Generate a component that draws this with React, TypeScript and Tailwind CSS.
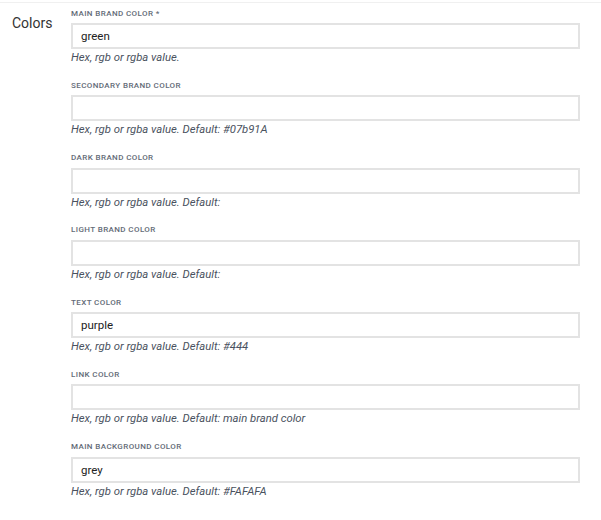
const fields = [
  { label: "Main brand color *", value: "green", hint: "Hex, rgb or rgba value." },
  { label: "Secondary brand color", value: "", hint: "Hex, rgb or rgba value. Default: #07b91A" },
  { label: "Dark brand color", value: "", hint: "Hex, rgb or rgba value. Default:" },
  { label: "Light brand color", value: "", hint: "Hex, rgb or rgba value. Default:" },
  { label: "Text color", value: "purple", hint: "Hex, rgb or rgba value. Default: #444" },
  { label: "Link color", value: "", hint: "Hex, rgb or rgba value. Default: main brand color" },
  { label: "Main background color", value: "grey", hint: "Hex, rgb or rgba value. Default: #FAFAFA" },
];

export default function App() {
  return (
    <div className="h-[520px] w-[601px] bg-white pt-[2px] font-['Roboto',sans-serif]">
      <section className="flex border-t border-[#f0f0f0]">
        {/* group title */}
        <div className="w-[71px] shrink-0 pl-[12px] pt-[11px] text-[14px] leading-[18px] text-[#333]">
          Colors
        </div>

        {/* field list */}
        <div className="w-[509px] pt-[4.5px]">
          {fields.map((f) => (
            <div key={f.label} className="mb-[14.8px]">
              <label className="block text-[8px] leading-[12px] font-medium uppercase tracking-[0.05em] text-[#636b77]">
                {f.label}
              </label>
              <input
                defaultValue={f.value}
                className="mt-[3.5px] block h-[26px] w-full border-2 border-[#e3e3e3] bg-white px-[8px] text-[11.5px] text-[#222] outline-none"
              />
              <p className="pt-[1px] text-[11.3px] leading-[15px] italic text-[#4a5260]">{f.hint}</p>
            </div>
          ))}
        </div>
      </section>
    </div>
  );
}
